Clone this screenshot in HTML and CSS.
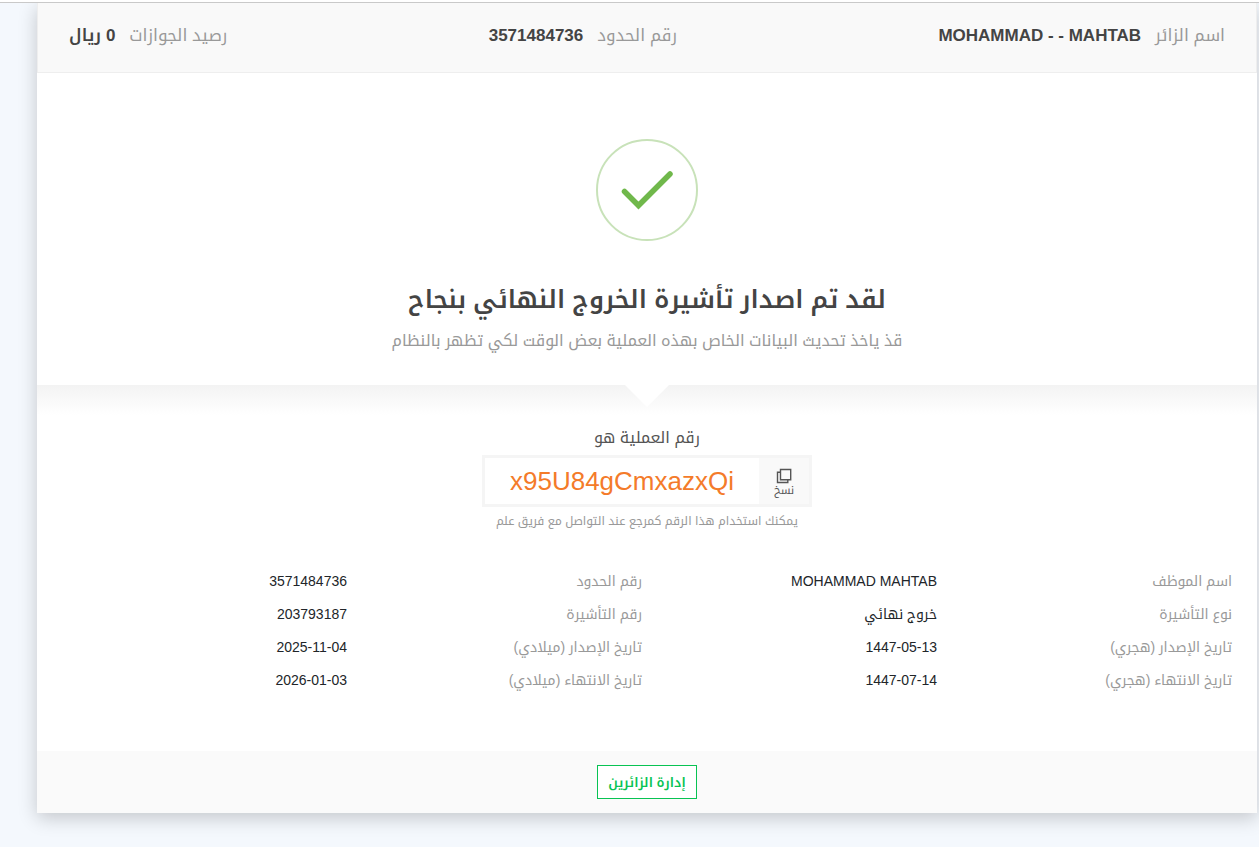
FILE: index.html
```html
<!DOCTYPE html>
<html lang="ar" dir="rtl">
<head>
    <meta charset="UTF-8">
    <meta name="viewport" content="width=device-width, initial-scale=1.0">
    <title>تأشيرة الخروج النهائي</title>
    <link rel="stylesheet" href="styles.css">
</head>
<body>

    <div class="top-line"></div>

    <main class="card">
        <!-- Visitor Summary -->
        <header class="summary">
            <div class="summary-item"><span>اسم الزائر</span><strong dir="ltr">MOHAMMAD - - MAHTAB</strong></div>
            <div class="summary-item"><span>رقم الحدود</span><strong>3571484736</strong></div>
            <div class="summary-item"><span>رصيد الجوازات</span><strong>0 ريال</strong></div>
        </header>

        <!-- Success Message -->
        <section class="success">
            <svg class="success-icon" viewBox="0 0 102 102" fill="none" aria-hidden="true">
                <circle cx="51" cy="51" r="50" stroke="#c8e2b9" stroke-width="2"/>
                <path d="M28.5 52.5L42.5 66.5L74 35" stroke="#70b84b" stroke-width="5.5" stroke-linecap="round"/>
            </svg>
            <h1>لقد تم اصدار تأشيرة الخروج النهائي بنجاح</h1>
            <p>قذ ياخذ تحديث البيانات الخاص بهذه العملية بعض الوقت لكي تظهر بالنظام</p>
        </section>

        <!-- Transaction Number -->
        <section class="transaction">
            <h2>رقم العملية هو</h2>
            <div class="code-box">
                <button type="button" class="copy-btn">
                    <svg viewBox="0 0 16 16" fill="none" stroke="#555" stroke-width="1.4" aria-hidden="true">
                        <path d="M4.5 1.5h10.2v10.2H4.5z"/>
                        <path d="M4.5 4.2H1.5v10.3h10.3v-2.8"/>
                    </svg>
                    نسخ
                </button>
                <span class="code" dir="ltr">x95U84gCmxazxQi</span>
            </div>
            <p>يمكنك استخدام هذا الرقم كمرجع عند التواصل مع فريق علم</p>
        </section>

        <!-- Visa Details -->
        <table class="details">
            <tr>
                <th scope="row">اسم الموظف</th><td>MOHAMMAD MAHTAB</td>
                <th scope="row">رقم الحدود</th><td>3571484736</td>
            </tr>
            <tr>
                <th scope="row">نوع التأشيرة</th><td>خروج نهائي</td>
                <th scope="row">رقم التأشيرة</th><td>203793187</td>
            </tr>
            <tr>
                <th scope="row">تاريخ الإصدار (هجري)</th><td><bdo dir="ltr">1447-05-13</bdo></td>
                <th scope="row">تاريخ الإصدار (ميلادي)</th><td><bdo dir="ltr">2025-11-04</bdo></td>
            </tr>
            <tr>
                <th scope="row">تاريخ الانتهاء (هجري)</th><td><bdo dir="ltr">1447-07-14</bdo></td>
                <th scope="row">تاريخ الانتهاء (ميلادي)</th><td><bdo dir="ltr">2026-01-03</bdo></td>
            </tr>
        </table>

        <footer class="actions">
            <button type="button" class="manage-btn">إدارة الزائرين</button>
        </footer>
    </main>

</body>
</html>
```
FILE: styles.css
```css
/* Global Styles */
* {
    box-sizing: border-box;
}

body {
    margin: 0;
    font-family: "Liberation Sans", "Noto Kufi Arabic", "Noto Sans Arabic", "DejaVu Sans", sans-serif;
    background-color: #f4f8fd;
    color: #212529;
}

h1, h2, p {
    margin: 0;
}

button {
    font-family: inherit;
    cursor: pointer;
}

.top-line {
    height: 3px;
    background-color: #fff;
    border-bottom: 1px solid #c9c9c9;
}

.card {
    margin: 0 2px 34px 37px;
    background-color: #fff;
    box-shadow: 0 5px 18px rgba(0, 0, 0, 0.2);
    clip-path: inset(0 -40px -40px -40px);
}

/* Visitor Summary */
.summary {
    display: flex;
    justify-content: space-between;
    height: 70px;
    padding: 20px 31px 0;
    background-color: #f9f9f9;
    border: 1px solid #eee;
    border-top: none;
    font-size: 17px;
    line-height: 26px;
}

.summary-item {
    display: flex;
    gap: 14px;
    white-space: nowrap;
}

.summary span {
    color: #999;
}

.summary strong {
    font-weight: 600;
    color: #444;
}

/* Success Message */
.success {
    padding: 66px 20px 30px;
    text-align: center;
}

.success-icon {
    display: block;
    width: 102px;
    height: 102px;
    margin: 0 auto 36px;
}

.success h1 {
    font-size: 25px;
    font-weight: 600;
    line-height: 44px;
    color: #444;
}

.success p {
    margin-top: 6px;
    font-size: 16px;
    line-height: 28px;
    color: #999;
}

/* Transaction Number */
.transaction {
    position: relative;
    display: flex;
    flex-direction: column;
    align-items: center;
    padding-top: 38px;
    background: linear-gradient(#f3f3f3, #fff 30px);
}

.transaction::before {
    content: "";
    position: absolute;
    top: 0;
    left: calc(50% - 22px);
    border: 22px solid transparent;
    border-top-color: #fff;
    border-bottom: none;
}

.transaction h2 {
    font-size: 16px;
    font-weight: 400;
    line-height: 30px;
    color: #555;
}

.code-box {
    display: flex;
    width: 330px;
    height: 52px;
    margin-top: 2px;
    background-color: #fff;
    border: 3px solid #f5f5f5;
}

.copy-btn {
    display: flex;
    flex-direction: column;
    align-items: center;
    justify-content: center;
    width: 50px;
    padding: 2px 0 0;
    background-color: #f9f9f9;
    border: none;
    font-size: 11px;
    line-height: 12px;
    color: #555;
}

.copy-btn svg {
    width: 16px;
    height: 16px;
}

.code {
    flex: 1;
    font-size: 26px;
    line-height: 46px;
    text-align: center;
    color: #f47b2a;
}

.transaction p {
    margin-top: 4px;
    font-size: 12px;
    line-height: 20px;
    color: #999;
}

/* Visa Details */
.details {
    width: calc(100% - 40px);
    margin: 34px 25px 54px 15px;
    table-layout: fixed;
    border-collapse: collapse;
    font-size: 14px;
    line-height: 33px;
}

.details th,
.details td {
    height: 33px;
    padding: 0;
    font-weight: 400;
    text-align: right;
}

.details th {
    color: #999;
}

/* Footer Actions */
.actions {
    display: flex;
    justify-content: center;
    padding: 14px;
    background-color: #fafafa;
}

.manage-btn {
    width: 100px;
    height: 34px;
    padding: 0;
    background-color: #fff;
    border: 1px solid #08c353;
    font-size: 13px;
    font-weight: 600;
    color: #08c353;
    white-space: nowrap;
}
```
